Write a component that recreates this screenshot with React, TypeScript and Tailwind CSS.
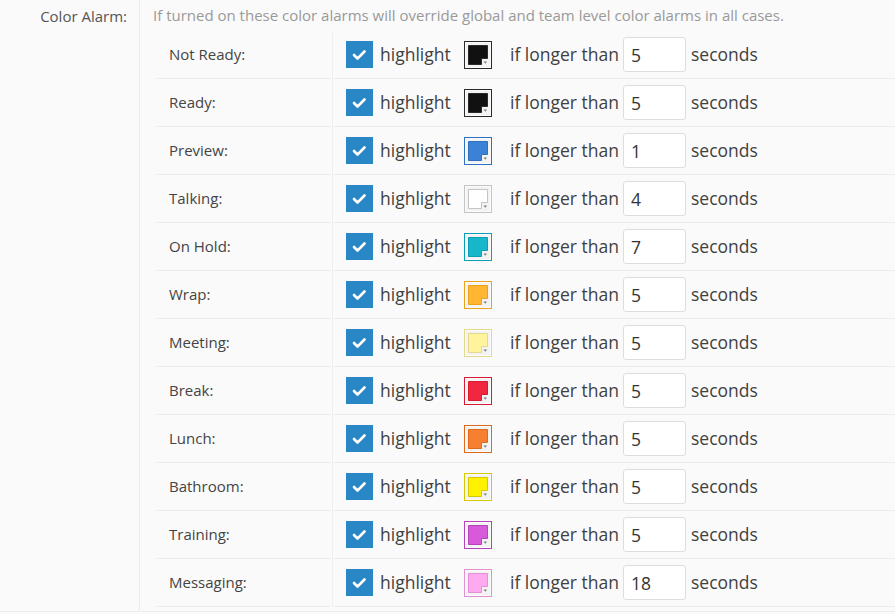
import React from 'react';

type Alarm = {
  label: string;
  color: string;
  border: string;
  seconds: string;
};

const alarms: Alarm[] = [
  { label: 'Not Ready:', color: '#111111', border: '#2a2a2a', seconds: '5' },
  { label: 'Ready:', color: '#111111', border: '#2a2a2a', seconds: '5' },
  { label: 'Preview:', color: '#3b82d6', border: '#2f6fc0', seconds: '1' },
  { label: 'Talking:', color: '#ffffff', border: '#c4c4c4', seconds: '4' },
  { label: 'On Hold:', color: '#17b6cb', border: '#0a9fb3', seconds: '7' },
  { label: 'Wrap:', color: '#ffb733', border: '#eaa21c', seconds: '5' },
  { label: 'Meeting:', color: '#fff39c', border: '#e3d88c', seconds: '5' },
  { label: 'Break:', color: '#f1263f', border: '#d81a32', seconds: '5' },
  { label: 'Lunch:', color: '#f6802f', border: '#dd6a1c', seconds: '5' },
  { label: 'Bathroom:', color: '#fff200', border: '#d6c800', seconds: '5' },
  { label: 'Training:', color: '#d65ad9', border: '#b642bb', seconds: '5' },
  { label: 'Messaging:', color: '#fdaaef', border: '#e28fd3', seconds: '18' },
];

const CheckBox = () => (
  <span className="flex h-[27px] w-[27px] items-center justify-center bg-[#2a87c6]">
    <svg width="27" height="27" viewBox="0 0 27 27">
      <path d="M8 14 L11.5 17.5 L18.5 10.5" fill="none" stroke="#ffffff" strokeWidth="2.6" strokeLinecap="round" strokeLinejoin="round" />
    </svg>
  </span>
);

const Swatch = ({ color, border }: { color: string; border: string }) => (
  <svg width="28" height="28" viewBox="0 0 28 28" className="block">
    <rect x="0.5" y="0.5" width="27" height="27" fill="#e4e4e4" stroke={border} />
    <rect x="1.5" y="1.5" width="25" height="25" fill="#f3f3f3" stroke="#fbfbfb" />
    <path d="M4.5 4.5 H23.5 V17.5 H17.5 V23.5 H4.5 Z" fill={color} stroke={border} />
    <path d="M19.5 20.5 H23 L21.25 22.75 Z" fill="#7a7a7a" />
  </svg>
);

const AlarmRow = ({ alarm }: { alarm: Alarm }) => (
  <div className="flex h-[48px]">
    <div className="flex w-[175px] items-center border-b border-[#ececec] pl-[13px] text-[15px] text-[#444]">
      {alarm.label}
    </div>
    <div className="flex w-[3px] justify-center">
      <div className="w-px bg-[#efefef]"></div>
    </div>
    <div className="flex flex-1 items-center border-b border-[#ececec] pl-[12px] text-[17.5px] text-[#3f3f3f]">
      <CheckBox />
      <span className="ml-[7px] w-[84px]">highlight</span>
      <Swatch color={alarm.color} border={alarm.border} />
      <span className="ml-[18px] w-[113px]">if longer than</span>
      <input
        readOnly
        value={alarm.seconds}
        className="h-[35px] w-[63px] rounded-[3px] border border-[#dddddd] bg-white px-[7px] text-[17.5px] text-[#333] outline-none"
      />
      <span className="ml-[5px]">seconds</span>
    </div>
  </div>
);

export default function App() {
  return (
    <div className="flex h-[614px] w-full overflow-hidden bg-[#fafafa] font-['Open_Sans',sans-serif]">
      <div className="h-[612px] w-[140px] shrink-0 border-r border-b border-[#ececec] pr-[12px] pt-[6px] text-right text-[15px] leading-[21px] text-[#555]">
        Color Alarm:
      </div>
      <div className="ml-px h-[612px] flex-1 border-b border-[#ececec]">
        <div className="h-[31px] pl-[12px] pt-[5px] text-[15px] leading-[21px] whitespace-nowrap text-[#999]">
          If turned on these color alarms will override global and team level color alarms in all cases.
        </div>
        <div className="ml-[15px]">
          {alarms.map((a) => (
            <AlarmRow key={a.label} alarm={a} />
          ))}
        </div>
      </div>
    </div>
  );
}
